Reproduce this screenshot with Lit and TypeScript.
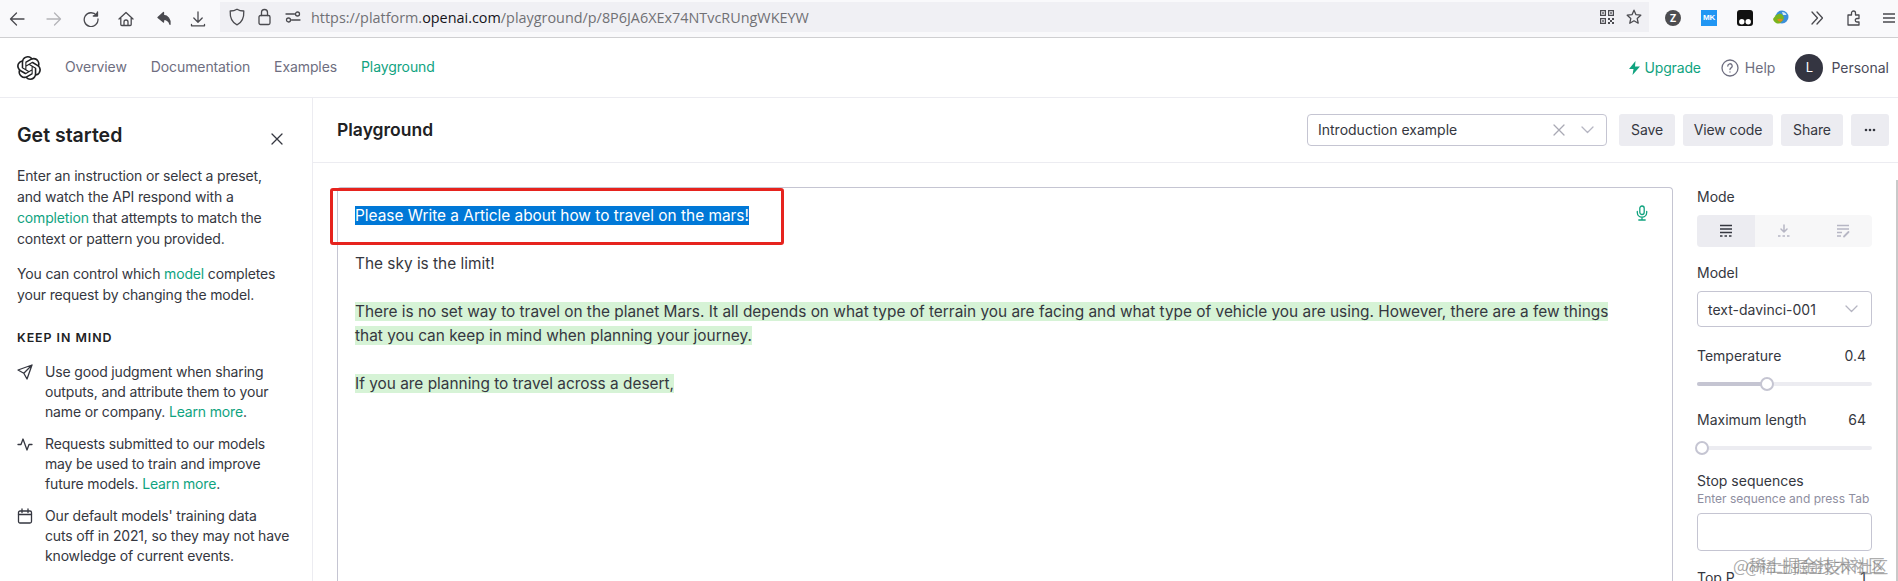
import { LitElement, html, css, svg } from "lit";
import { customElement } from "lit/decorators.js";

const logoPath = "M22.2819 9.8211a5.9847 5.9847 0 0 0-.5157-4.9108 6.0462 6.0462 0 0 0-6.5098-2.9A6.0651 6.0651 0 0 0 4.9807 4.1818a5.9847 5.9847 0 0 0-3.9977 2.9 6.0462 6.0462 0 0 0 .7427 7.0966 5.98 5.98 0 0 0 .511 4.9107 6.051 6.051 0 0 0 6.5146 2.9001A5.9847 5.9847 0 0 0 13.2599 24a6.0557 6.0557 0 0 0 5.7718-4.2058 5.9894 5.9894 0 0 0 3.9977-2.9001 6.0557 6.0557 0 0 0-.7475-7.0729zm-9.022 12.6081a4.4755 4.4755 0 0 1-2.8764-1.0408l.1419-.0804 4.7783-2.7582a.7948.7948 0 0 0 .3927-.6813v-6.7369l2.02 1.1686a.071.071 0 0 1 .038.052v5.5826a4.504 4.504 0 0 1-4.4945 4.4944zm-9.6607-4.1254a4.4708 4.4708 0 0 1-.5346-3.0137l.142.0852 4.783 2.7582a.7712.7712 0 0 0 .7806 0l5.8428-3.3685v2.3324a.0804.0804 0 0 1-.0332.0615L9.74 19.9502a4.4992 4.4992 0 0 1-6.1408-1.6464zM2.3408 7.8956a4.485 4.485 0 0 1 2.3655-1.9728V11.6a.7664.7664 0 0 0 .3879.6765l5.8144 3.3543-2.0201 1.1685a.0757.0757 0 0 1-.071 0l-4.8303-2.7865A4.504 4.504 0 0 1 2.3408 7.872zm16.5963 3.8558L13.1038 8.364 15.1192 7.2a.0757.0757 0 0 1 .071 0l4.8303 2.7913a4.4944 4.4944 0 0 1-.6765 8.1042v-5.6772a.79.79 0 0 0-.407-.667zm2.0107-3.0231l-.142-.0852-4.7735-2.7818a.7759.7759 0 0 0-.7854 0L9.409 9.2297V6.8974a.0662.0662 0 0 1 .0284-.0615l4.8303-2.7866a4.4992 4.4992 0 0 1 6.6802 4.66zM8.3065 12.863l-2.02-1.1638a.0804.0804 0 0 1-.038-.0567V6.0742a4.4992 4.4992 0 0 1 7.3757-3.4537l-.142.0805L8.704 5.459a.7948.7948 0 0 0-.3927.6813zm1.0976-2.3654l2.602-1.4998 2.6069 1.4998v2.9994l-2.5974 1.4997-2.6067-1.4997Z";

const icon = (w: number, h: number, vb: string, body: unknown, cls = "") =>
  html`<svg class=${cls} width=${w} height=${h} viewBox=${vb} fill="none" stroke="currentColor" stroke-width="1.3" stroke-linecap="round" stroke-linejoin="round">${body}</svg>`;

const chevron = icon(13, 8, "0 0 13 8", svg`<path d="M1 1l5.5 5.5L12 1"/>`, "chev");
const cross = icon(12, 12, "0 0 12 12", svg`<path d="M1 1l10 10M11 1L1 11"/>`, "cross");

@customElement("app-root")
export class AppRoot extends LitElement {
  static styles = css`
    :host { display: block; width: 1898px; height: 581px; overflow: hidden; position: relative; background: #fff;
      font-family: Inter, "Noto Sans CJK SC", sans-serif; color: #353740; font-size: 14px; }
    * { box-sizing: border-box; }
    .browser { height: 38px; background: #f9f9fb; border-bottom: 1px solid #cfcfd1; display: flex; align-items: flex-start; color: #4a4a4f; }
    .tools { width: 220px; height: 37px; display: flex; align-items: center; flex: none; padding-left: 9px; gap: 0; }
    .tools svg { display: block; flex: none; }
    .t1 { margin-right: 21px; }
    .t2 { margin-right: 21px; color: #b4b4b8; }
    .t3 { margin-right: 19px; }
    .t4 { margin-right: 22px; }
    .t5 { margin-right: 18px; }
    .addr { width: 1429px; height: 30px; margin-top: 2px; background: #f0f0f4; display: flex; align-items: center; flex: none; padding-left: 9px; }
    .addr .lock { margin-left: 13px; }
    .addr .tune { margin-left: 14px; }
    .url { margin-left: 10px; font-size: 14.4px; color: #717175; font-family: "Open Sans", Inter, sans-serif; white-space: nowrap; }
    .url b { font-weight: 400; color: #15141a; }
    .spacer { flex: 1; }
    .qr { margin-right: 12px; }
    .star { margin-right: 7px; }
    .exts { display: flex; align-items: center; height: 35px; flex: 1; padding-left: 16px; }
    .zc { width: 16px; height: 16px; border-radius: 50%; background: #4d4d50; color: #fff; font: 700 10px/16px Inter, sans-serif; text-align: center; margin-right: 20px; flex: none; }
    .mk { width: 16px; height: 16px; background: #2196f3; color: #fff; font: 700 8px/16px "Liberation Sans", sans-serif; text-align: center; margin-right: 20px; flex: none; letter-spacing: -0.2px; }
    .ghost { margin-right: 20px; flex: none; }
    .globe { margin-right: 22px; flex: none; }
    .more2 { margin-right: 24px; flex: none; }
    .puzzle { margin-right: 23px; flex: none; }

    .nav { height: 60px; border-bottom: 1px solid #ececf1; display: flex; align-items: center; padding: 0 9px 0 17px; }
    .logo { color: #202123; flex: none; }
    .links { display: flex; gap: 24px; margin-left: 24px; margin-top: -2px; color: #6e6e80; letter-spacing: -0.1px; }
    .links .on { color: #10a37f; }
    .nav .right { margin-left: auto; display: flex; align-items: center; color: #6e6e80; }
    .upgrade { color: #10a37f; display: flex; align-items: center; gap: 4px; margin-right: 20px; letter-spacing: -0.15px; }
    .help { display: flex; align-items: center; gap: 6px; margin-right: 20px; }
    .avatar { width: 28px; height: 28px; border-radius: 50%; background: #343541; color: #fff; text-align: center; line-height: 27px; font-size: 13px; margin-right: 8px; }
    .personal { color: #4b4b5a; }

    .body { display: flex; height: 483px; }
    .side { width: 313px; flex: none; border-right: 1px solid #ececf1; padding: 23px 0 0 17px; position: relative; line-height: 21px; letter-spacing: -0.16px; }
    .side h2 { margin: 0; font-size: 19.5px; line-height: 28px; font-weight: 600; color: #202123; letter-spacing: 0; }
    .close { position: absolute; left: 271px; top: 31px; color: #353740; }
    .side p { margin: 16px 0 0; width: 270px; }
    .side p + p { margin-top: 14px; }
    .side a { color: #10a37f; }
    .keep { margin-top: 25px; font-size: 12.4px; line-height: 16px; font-weight: 600; letter-spacing: 0.95px; color: #202123; }
    .items { margin-top: 16px; display: flex; flex-direction: column; gap: 12px; }
    .item { display: flex; gap: 12px; line-height: 20px; }
    .item svg { flex: none; margin-top: 2px; }

    .main { flex: 1; display: flex; flex-direction: column; min-width: 0; }
    .head { height: 65px; border-bottom: 1px solid #ececf1; display: flex; align-items: center; padding: 0 9px 0 24px; flex: none; }
    .head h1 { margin: -2px 0 0; font-size: 17.5px; font-weight: 600; color: #202123; }
    .picker { margin-left: auto; width: 300px; height: 32px; border: 1px solid #c5c5d2; border-radius: 4px; display: flex; align-items: center; padding: 0 12px 0 10px; margin-right: 12px; }
    .picker span { margin-top: -1px; }
    .picker .cross { margin-left: auto; color: #a9a9b4; margin-right: 16px; }
    .chev { color: #b5b5c2; }
    .btn { height: 32px; background: #ececf1; border-radius: 3px; display: flex; align-items: center; justify-content: center; margin-left: 8px; padding: 0 0 2px; letter-spacing: -0.1px; }
    .btn.first { margin-left: 0; width: 56px; }
    .btn.vc { width: 90px; }
    .btn.sh { width: 62px; }
    .btn.mo { width: 38px; padding: 0; }

    .work { flex: 1; display: flex; padding: 24px 0 0 24px; min-height: 0; position: relative; }
    .editor { width: 1336px; flex: none; border: 1px solid #c5c5d2; border-bottom: 0; border-radius: 4px 4px 0 0; position: relative; padding: 16px 17px 0; font-size: 15.4px; line-height: 24px; color: #353740; }
    .line { height: 24px; white-space: nowrap; }
    .sel { background: #0078d7; color: #fff; }
    .hl { background: #d6f3d6; }
    .redbox { position: absolute; left: -8px; top: 0; width: 454px; height: 57px; border: 3px solid #e6231e; border-radius: 3px; }
    .mic { position: absolute; left: 1298px; top: 16px; color: #10a37f; }

    .panel { width: 175px; flex: none; margin-left: 24px; }
    .lbl { line-height: 20px; display: flex; justify-content: space-between; color: #353740; padding-right: 6px; }
    .seg { margin-top: 8px; height: 32px; display: flex; background: #f7f7f8; border-radius: 4px; }
    .seg div { flex: 1; display: flex; align-items: center; justify-content: center; color: #b6b6c4; }
    .seg div.on { background: #ececf1; color: #353740; border-radius: 4px 0 0 4px; }
    .mt-model { margin-top: 16px; }
    .sel-model { margin-top: 8px; height: 36px; border: 1px solid #c5c5d2; border-radius: 4px; display: flex; align-items: center; justify-content: space-between; padding: 0 13px 0 10px; }
    .mt-temp { margin-top: 19px; }
    .slider { margin-top: 11px; height: 14px; position: relative; }
    .track { position: absolute; left: 0; right: 0; top: 5px; height: 4px; border-radius: 2px; background: #ececf1; }
    .fill { position: absolute; left: 0; top: 5px; height: 4px; border-radius: 2px; background: #c5c5d2; }
    .knob { position: absolute; top: 0; width: 14px; height: 14px; border-radius: 50%; background: #fff; border: 2px solid #c5c5d2; transform: translateX(-7px); }
    .mt-stop { margin-top: 16px; }
    .hint { margin-top: -1px; font-size: 12px; line-height: 18px; color: #8e8ea0; white-space: nowrap; }
    .stop { margin-top: 5px; height: 38px; border: 1px solid #c5c5d2; border-radius: 4px; }
    .mt-top { margin-top: 17px; }
    .scroll { position: absolute; right: 0; top: 17px; bottom: 0; width: 2px; background: #c9c9c9; }
    .wm { position: absolute; left: 1733px; top: 554px; font-size: 17px; line-height: 22px; color: rgba(120,120,120,.62); white-space: nowrap; font-family: "Noto Sans CJK SC", sans-serif; }
    .wm2 { left: 1745px; top: 555px; font-size: 16px; }
  `;

  private slider(pct: number) {
    return html`<div class="slider"><div class="track"></div><div class="fill" style="width:${pct}px"></div><div class="knob" style="left:${pct}px"></div></div>`;
  }

  render() {
    return html`
      <div class="browser">
        <div class="tools">
          ${icon(16, 16, "0 0 16 16", svg`<path d="M15 8H1.5M7.5 2L1.5 8l6 6"/>`, "t1")}
          ${icon(16, 16, "0 0 16 16", svg`<path d="M1 8h13.5M8.5 2l6 6-6 6"/>`, "t2")}
          ${icon(16, 16, "0 0 16 16", svg`<path d="M13.5 4.3A6.9 6.9 0 1 0 15 8"/><path d="M14.5 0.8v4.2h-4.2" fill="currentColor"/>`, "t3")}
          ${icon(16, 16, "0 0 16 16", svg`<path d="M1 8l7-6.5L15 8M2.8 7v6.5a1 1 0 0 0 1 1h8.4a1 1 0 0 0 1-1V7M6 14.500V11a2 2 0 0 1 4 0v3.500"/>`, "t4")}
          ${icon(16, 16, "0 0 16 16", svg`<path d="M7.500 1.500L2 6.500l5.500 4.500V8.300c3 0 5.500 1.200 6.500 5 .6-5-2.200-8.500-6.500-8.800z" fill="currentColor"/>`, "t5")}
          ${icon(16, 16, "0 0 16 16", svg`<path d="M8 1v10M3.800 7L8 11.200 12.200 7M1.500 13.500v1.300h13v-1.300"/>`)}
        </div>
        <div class="addr">
          ${icon(16, 18, "0 0 16 18", svg`<path d="M8 1.200c2 1.300 4 1.800 6.800 1.800.3 6.500-1.700 11.500-6.800 13.800C2.900 14.500.9 9.500 1.200 3 4 3 6 2.500 8 1.200z"/>`)}
          ${icon(13, 18, "0 0 13 18", svg`<rect x="1" y="7.500" width="11" height="9" rx="1.500"/><path d="M3.500 7.500V4.500a3 3 0 0 1 6 0v3"/>`, "lock")}
          ${icon(16, 14, "0 0 16 14", svg`<path d="M1 4h8.500M15 10H6.500"/><circle cx="12.500" cy="4" r="2"/><circle cx="3.500" cy="10" r="2"/>`, "tune")}
          <span class="url">https://platform.<b>openai.com</b>/playground/p/8P6JA6XEx74NTvcRUngWKEYW</span>
          <span class="spacer"></span>
          <svg class="qr" width="14" height="14" viewBox="0 0 14 14" fill="#4a4a4f">
            <path fill-rule="evenodd" d="M0 0h6v6H0zM1.200 1.200v3.600h3.600V1.200zM8 0h6v6H8zM9.200 1.200v3.600h3.600V1.200zM0 8h6v6H0zM1.200 9.200v3.600h3.600V9.200z"/>
            <rect x="2.200" y="2.200" width="1.600" height="1.600"/><rect x="10.200" y="2.200" width="1.600" height="1.600"/><rect x="2.200" y="10.200" width="1.600" height="1.600"/>
            <rect x="8" y="8" width="2" height="2"/><rect x="12" y="8" width="2" height="2"/><rect x="10" y="10" width="2" height="2"/><rect x="8" y="12" width="2" height="2"/><rect x="12" y="12" width="2" height="2"/>
          </svg>
          ${icon(16, 16, "0 0 16 16", svg`<path d="M8 1.200l2 4.500 4.800.5-3.600 3.200 1 4.800L8 11.800l-4.200 2.400 1-4.800L1.200 6.200 6 5.700z"/>`, "star")}
        </div>
        <div class="exts">
          <div class="zc">Z</div>
          <div class="mk">MK</div>
          <svg class="ghost" width="16" height="16" viewBox="0 0 16 16"><path fill="#111" d="M3 0h10a3 3 0 0 1 3 3v10a3 3 0 0 1-3 3H3a3 3 0 0 1-3-3V3a3 3 0 0 1 3-3z"/><circle cx="4.800" cy="11.800" r="2.700" fill="#fff"/><circle cx="11.200" cy="11.800" r="2.700" fill="#fff"/></svg>
          <svg class="globe" width="16" height="16" viewBox="0 0 16 16"><circle cx="9" cy="7" r="6.500" fill="#3c8fd8"/><path d="M0 9c2-3 5-6 8-5 2 1 4 3 2 6-2 3-4 4-6 3.500C2 13 .5 11 0 9z" fill="#7ab41d"/><path d="M4 9.500c2-1 4-1 6 0-1 2.500-4 3-6 0z" fill="#e08a1e"/><path d="M9 2c2 0 4 1 4.500 3L10 5z" fill="#d7ecf9"/></svg>
          ${icon(12, 14, "0 0 12 14", svg`<path d="M1 1l5.500 6L1 13M6 1l5.500 6L6 13"/>`, "more2")}
          ${icon(13, 16, "0 0 13 16", svg`<path d="M1 15V5h3.500V3a2 2 0 0 1 4 0v2H12v3.500h-2a1.700 1.700 0 0 0 0 3.500h2V15z"/>`, "puzzle")}
          ${icon(12, 10, "0 0 12 10", svg`<path d="M0 1h12M0 5h12M0 9h12"/>`)}
        </div>
      </div>

      <div class="nav">
        <svg class="logo" width="24" height="24" viewBox="0 0 24 24" fill="currentColor"><path d=${logoPath}/></svg>
        <div class="links"><span>Overview</span><span>Documentation</span><span>Examples</span><span class="on">Playground</span></div>
        <div class="right">
          <div class="upgrade"><svg width="11" height="14" viewBox="0 0 11 14" fill="currentColor"><path d="M6.500 0L0 8h4.500L3.500 14 11 5.500H6z"/></svg>Upgrade</div>
          <div class="help">${icon(18, 18, "0 0 18 18", svg`<circle cx="9" cy="9" r="8"/><path d="M6.800 7a2.200 2.200 0 1 1 3.300 1.900c-.7.400-1.100.9-1.100 1.600M9 13v.1"/>`)}Help</div>
          <div class="avatar">L</div><span class="personal">Personal</span>
        </div>
      </div>

      <div class="body">
        <aside class="side">
          <h2>Get started</h2>
          <span class="close">${cross}</span>
          <p>Enter an instruction or select a preset, and watch the API respond with a <a>completion</a> that attempts to match the context or pattern you provided.</p>
          <p>You can control which <a>model</a> completes your request by changing the model.</p>
          <div class="keep">KEEP IN MIND</div>
          <div class="items">
            <div class="item">
              ${icon(16, 16, "0 0 16 16", svg`<path d="M15 1L6.800 9.200M15 1L10 15 6.800 9.200 1 6z"/>`)}
              <span>Use good judgment when sharing<br>outputs, and attribute them to your<br>name or company. <a>Learn more</a>.</span>
            </div>
            <div class="item">
              ${icon(16, 16, "0 0 16 16", svg`<path d="M1 8.500h3L6 3l4 11 2-5.500h3"/>`)}
              <span>Requests submitted to our models<br>may be used to train and improve<br>future models. <a>Learn more</a>.</span>
            </div>
            <div class="item">
              ${icon(16, 16, "0 0 16 16", svg`<rect x="1.500" y="3" width="13" height="12" rx="1.500"/><path d="M1.500 6.500h13M5 1v3.500M11 1v3.500"/>`)}
              <span>Our default models' training data<br>cuts off in 2021, so they may not have<br>knowledge of current events.</span>
            </div>
          </div>
        </aside>

        <main class="main">
          <div class="head">
            <h1>Playground</h1>
            <div class="picker"><span>Introduction example</span>${cross}${chevron}</div>
            <div class="btn first">Save</div>
            <div class="btn vc">View code</div>
            <div class="btn sh">Share</div>
            <div class="btn mo"><svg width="12" height="4" viewBox="0 0 12 4" fill="currentColor"><circle cx="2" cy="2" r="1.300"/><circle cx="6" cy="2" r="1.300"/><circle cx="10" cy="2" r="1.300"/></svg></div>
          </div>
          <div class="work">
            <div class="editor">
              <div class="line"><span class="sel">Please Write a Article about how to travel on the mars!</span></div>
              <div class="line"></div>
              <div class="line">The sky is the limit!</div>
              <div class="line"></div>
              <div class="line"><span class="hl">There is no set way to travel on the planet Mars. It all depends on what type of terrain you are facing and what type of vehicle you are using. However, there are a few things</span></div>
              <div class="line"><span class="hl">that you can keep in mind when planning your journey.</span></div>
              <div class="line"></div>
              <div class="line"><span class="hl">If you are planning to travel across a desert,</span></div>
              <div class="redbox"></div>
              <span class="mic">${icon(12, 16, "0 0 12 16", svg`<rect x="3.800" y="1" width="4.400" height="8.500" rx="2.200"/><path d="M1.300 6.500v1a4.700 4.700 0 0 0 9.400 0v-1M6 12.200v2.300M2.800 15h6.400"/>`)}</span>
            </div>
            <div class="panel">
              <div class="lbl">Mode</div>
              <div class="seg">
                <div class="on">${icon(14, 14, "0 0 14 14", svg`<path stroke-width="1.600" stroke-linecap="butt" d="M1 1.500h12M1 5h12M1 8.500h12" /><path stroke-width="1.600" stroke-linecap="butt" stroke-dasharray="2.500 2" d="M1 12h12"/>`)}</div>
                <div>${icon(14, 14, "0 0 14 14", svg`<path stroke-width="1.500" d="M7 1v6.500M4 5l3 3 3-3"/><path stroke-width="1.500" stroke-linecap="butt" stroke-dasharray="2.500 2" d="M1 12h12"/>`)}</div>
                <div>${icon(14, 14, "0 0 14 14", svg`<path stroke-width="1.500" stroke-linecap="butt" d="M1 1.500h12M1 5h12M1 8.500h5M1 12h4"/><path stroke-width="1.800" d="M8 12.500l4.500-4.500"/>`)}</div>
              </div>
              <div class="lbl mt-model">Model</div>
              <div class="sel-model"><span>text-davinci-001</span>${chevron}</div>
              <div class="lbl mt-temp"><span>Temperature</span><span>0.4</span></div>
              ${this.slider(70)}
              <div class="lbl mt-temp"><span>Maximum length</span><span>64</span></div>
              ${this.slider(5)}
              <div class="lbl mt-stop">Stop sequences</div>
              <div class="hint">Enter sequence and press Tab</div>
              <div class="stop"></div>
              <div class="lbl mt-top"><span>Top P</span><span>1</span></div>
            </div>
            <div class="scroll"></div>
          </div>
        </main>
      </div>
      <div class="wm">@稀土掘金技术社区</div>
      <div class="wm wm2">@稀土掘金技术社区</div>
    `;
  }
}
